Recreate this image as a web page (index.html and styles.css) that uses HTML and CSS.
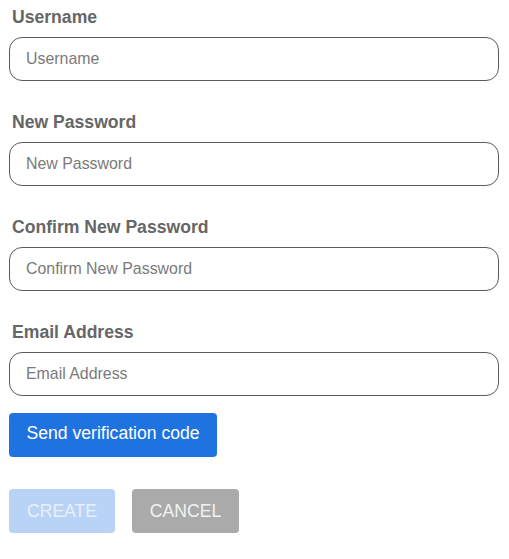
FILE: index.html
```html
<!DOCTYPE html>
<html lang="en">
<head>
<meta charset="utf-8">
<title>Create account</title>
<link rel="stylesheet" href="styles.css">
</head>
<body>
<form class="form">
  <div class="field">
    <label class="label" for="username">Username</label>
    <input class="input" id="username" type="text" placeholder="Username">
  </div>
  <div class="field">
    <label class="label" for="newpw">New Password</label>
    <input class="input" id="newpw" type="password" placeholder="New Password">
  </div>
  <div class="field">
    <label class="label" for="confirmpw">Confirm New Password</label>
    <input class="input" id="confirmpw" type="password" placeholder="Confirm New Password">
  </div>
  <div class="field">
    <label class="label" for="email">Email Address</label>
    <input class="input" id="email" type="email" placeholder="Email Address">
  </div>
  <div class="verify-row">
    <button class="btn btn-primary" type="button">Send verification code</button>
  </div>
  <div class="actions">
    <button class="btn btn-create" type="button" disabled>CREATE</button>
    <button class="btn btn-cancel" type="button">CANCEL</button>
  </div>
</form>
</body>
</html>
```

FILE: styles.css
```css
* {
  box-sizing: border-box;
}

html, body {
  margin: 0;
  padding: 0;
  background: #ffffff;
}

body {
  font-family: "Liberation Sans", Arial, sans-serif;
}

.form {
  display: flex;
  flex-direction: column;
  padding: 6.5px 10px 0 9px;
  width: 509px;
}

.field {
  display: flex;
  flex-direction: column;
  margin-bottom: 31px;
}

.field:nth-child(4) {
  margin-bottom: 17.5px;
}

.label {
  font-size: 17.6px;
  line-height: 20px;
  font-weight: bold;
  color: #666666;
  padding-left: 3px;
  margin-bottom: 10.5px;
}

.input {
  width: 490px;
  height: 43.5px;
  border: 1.5px solid #5c5c5c;
  border-radius: 13px;
  padding: 0 15px 0 16px;
  font-family: "Liberation Sans", Arial, sans-serif;
  font-size: 15.9px;
  color: #333333;
  background: #ffffff;
  outline: none;
}

.input::placeholder {
  color: #7a7a7a;
  opacity: 1;
}

.verify-row {
  display: flex;
  margin-bottom: 32px;
}

.btn {
  font-family: "Liberation Sans", Arial, sans-serif;
  font-size: 17.6px;
  border: none;
  border-radius: 4px;
  padding: 0 17.5px;
  height: 44px;
  line-height: 20px;
  cursor: pointer;
}

.btn-primary {
  background: #1f73e0;
  color: #ffffff;
  height: 43.5px;
  padding-bottom: 4px;
}

.actions {
  display: flex;
  gap: 17px;
}

.btn-create {
  width: 106px;
  padding: 0;
  background: #b8d3f6;
  color: #e8f0fc;
  cursor: default;
  height: 44.5px;
}

.btn-cancel {
  width: 107px;
  padding: 0;
  background: #aaaaaa;
  color: #f2f2f2;
  height: 44.5px;
}
```
